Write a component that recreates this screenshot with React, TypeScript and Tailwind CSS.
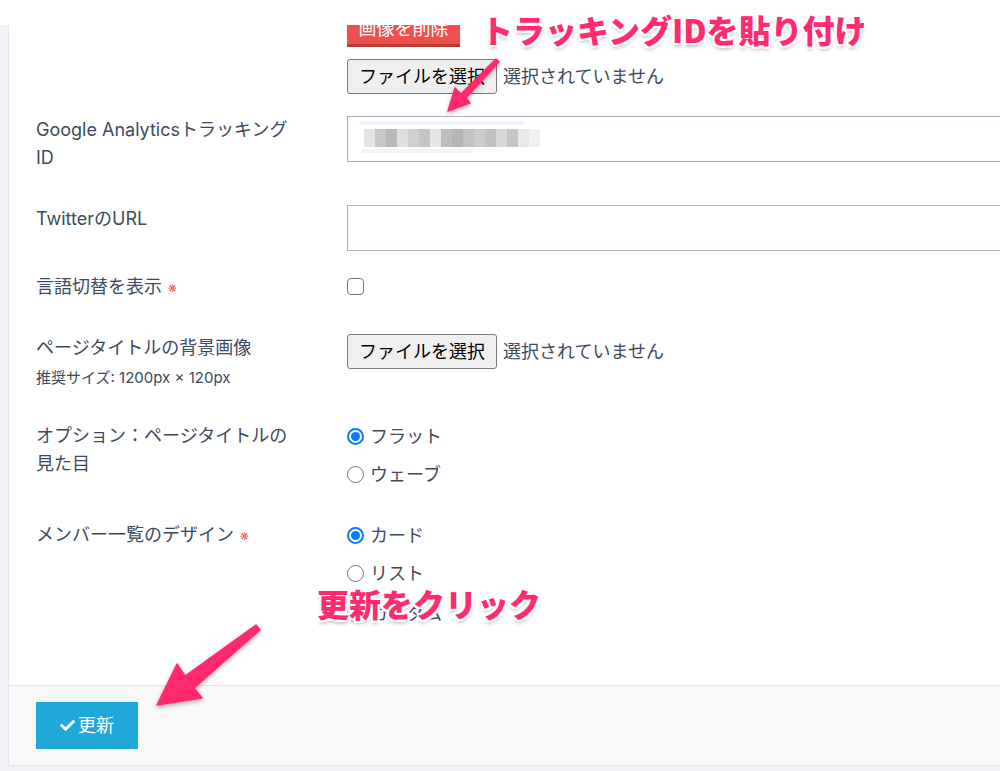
import { FaCheck } from 'react-icons/fa';

const font = { fontFamily: 'Inter, "Noto Sans CJK JP", sans-serif' };

const FileInput = () => (
  <div className="flex items-center gap-[6px]">
    <button className="h-[35px] w-[150px] rounded-[3px] border border-[#7a7a7a] bg-[#efefef] text-[18px] text-black">
      ファイルを選択
    </button>
    <span className="text-[18px] text-[#3d4a5e]">選択されていません</span>
  </div>
);

const Radio = ({ label, checked }: { label: string; checked?: boolean }) => (
  <div className="flex h-[28px] items-center gap-[6px] text-[18px] text-[#3d4a5e]">
    {checked ? (
      <span className="flex h-[17px] w-[17px] items-center justify-center rounded-full border-2 border-[#0b7bff] bg-white">
        <span className="h-[9px] w-[9px] rounded-full bg-[#0b7bff]" />
      </span>
    ) : (
      <span className="h-[17px] w-[17px] rounded-full border border-[#767676] bg-white" />
    )}
    <span>{label}</span>
  </div>
);

const Req = () => <span className="ml-[6px] text-[14px] text-[#f0504d]">※</span>;

const mosaic = [
  '#e4e4e4', '#c8c8c8', '#b9b9b9', '#dedede', '#d0d0d0', '#c4c4c4', '#e6e6e6', '#bdbdbd',
  '#b5b5b5', '#c2c2c2', '#cbcbcb', '#c0c0c0', '#d8d8d8', '#c6c6c6', '#e8e8e8', '#f0f0f0',
];

const shadow =
  '[text-shadow:2px_0_#fff,-2px_0_#fff,0_2px_#fff,0_-2px_#fff,2px_2px_#fff,-2px_-2px_#fff,2px_-2px_#fff,-2px_2px_#fff,0_3px_4px_rgba(0,0,0,0.35)]';

const App = () => {
  return (
    <div className="relative h-[771px] w-[1000px] overflow-hidden bg-[#f0f2f7]" style={font}>
      <div className="h-[25px] bg-white" />

      <div className="ml-[8px] border-b border-l border-[#e1e5ee] bg-white">
        <div className="pb-[58px] pl-[27px]">
          {/* logo image controls */}
          <div className="grid grid-cols-[311px_1fr]">
            <div />
            <div>
              <div className="flex h-[22px] items-end overflow-hidden">
                <button className="h-[34px] w-[113px] border-b-[3px] border-[#b83a37] bg-[#f0504d] text-[18px] text-white">
                  画像を削除
                </button>
              </div>
              <div className="mt-[12px]">
                <FileInput />
              </div>
            </div>
          </div>

          <div className="mt-[22px] grid grid-cols-[311px_1fr]">
            <div className="w-[262px] text-[18px] leading-[28px] text-[#3d4a5e]">
              Google Analyticsトラッキング ID
            </div>
            <div className="relative h-[46px] w-[700px] border border-[#a9b0c2] bg-white">
              <div className="absolute left-[12px] top-[4px] flex h-[4px] w-[165px] bg-[#f3f3f3]" />
              <div className="absolute left-[16px] top-[12px] flex h-[18px]">
                {mosaic.map((c, i) => (
                  <span key={i} className="h-full w-[11px]" style={{ backgroundColor: c }} />
                ))}
              </div>
              <div className="absolute left-[14px] top-[32px] h-[4px] w-[110px] bg-[#f4f4f4]" />
            </div>
          </div>

          <div className="mt-[33px] grid grid-cols-[311px_1fr]">
            <div className="text-[18px] leading-[28px] text-[#3d4a5e]">TwitterのURL</div>
            <div className="h-[46px] w-[700px] border border-[#a9b0c2] bg-white" />
          </div>

          <div className="mt-[22px] grid grid-cols-[311px_1fr]">
            <div className="text-[18px] leading-[28px] text-[#3d4a5e]">
              言語切替を表示
              <Req />
            </div>
            <div className="pt-[5px]">
              <span className="block h-[17px] w-[17px] rounded-[4px] border border-[#767676] bg-white" />
            </div>
          </div>

          <div className="mt-[32px] grid grid-cols-[311px_1fr]">
            <div className="text-[#3d4a5e]">
              <div className="text-[18px] leading-[28px]">ページタイトルの背景画像</div>
              <div className="mt-[6px] text-[15px] leading-[20px]">推奨サイズ: 1200px × 120px</div>
            </div>
            <div>
              <FileInput />
            </div>
          </div>

          <div className="mt-[34px] grid grid-cols-[311px_1fr]">
            <div className="w-[262px] text-[18px] leading-[28px] text-[#3d4a5e]">
              オプション：ページタイトルの見た目
            </div>
            <div className="flex flex-col gap-[10px]">
              <Radio label="フラット" checked />
              <Radio label="ウェーブ" />
            </div>
          </div>

          <div className="mt-[33px] grid grid-cols-[311px_1fr]">
            <div className="text-[18px] leading-[28px] text-[#3d4a5e]">
              メンバー一覧のデザイン
              <Req />
            </div>
            <div className="flex flex-col gap-[10px]">
              <Radio label="カード" checked />
              <Radio label="リスト" />
              <div className="mt-[2px]">
                <Radio label="カスタム" />
              </div>
            </div>
          </div>
        </div>

        <div className="border-t border-[#e1e5ee] bg-[#f8f8f8] pb-[16px] pl-[27px] pt-[16px]">
          <button className="flex h-[47px] w-[102px] items-center justify-center gap-[3px] bg-[#20a8d8] text-[18px] text-white">
            <FaCheck className="h-[15px] w-[15px]" />
            更新
          </button>
        </div>
      </div>

      {/* annotations */}
      <div
        className={`absolute left-[481px] top-[9px] text-[32px] font-black leading-[40px] text-[#ff2b6d] ${shadow}`}
        style={{ fontFamily: '"Noto Sans CJK JP", sans-serif' }}
      >
        トラッキングIDを貼り付け
      </div>
      <div
        className={`absolute left-[317px] top-[582px] text-[32px] font-black leading-[42px] text-[#ff2b6d] ${shadow}`}
        style={{ fontFamily: '"Noto Sans CJK JP", sans-serif' }}
      >
        更新をクリック
      </div>

      <svg className="pointer-events-none absolute left-0 top-0" width="1000" height="771">
        <defs>
          <filter id="sh" x="-20%" y="-20%" width="140%" height="140%">
            <feDropShadow dx="0" dy="2" stdDeviation="2" floodColor="#000" floodOpacity="0.3" />
          </filter>
        </defs>
        <g filter="url(#sh)" fill="#ff2b6d" stroke="#ff2b6d" strokeLinejoin="round" strokeWidth="1.5">
          <polygon points="496,59 499,62 466,98 470,103 448,111 455,88 461,94" />
          <polygon points="256,625 260,630 194,688 202,698 157,705 177,664 185,676" />
        </g>
      </svg>
    </div>
  );
};

export default App;
